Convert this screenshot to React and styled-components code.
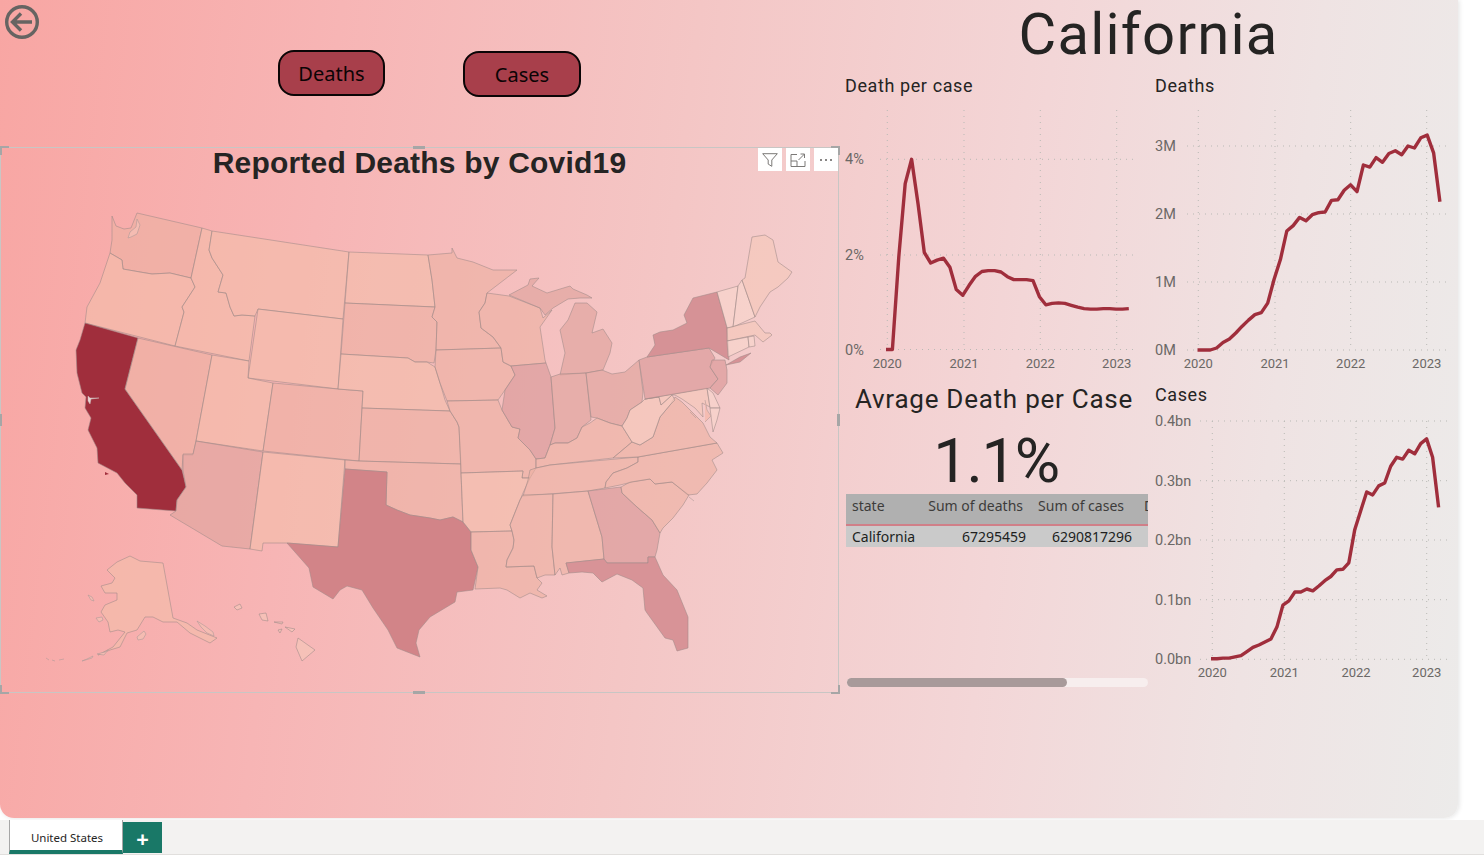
import styled, { createGlobalStyle } from 'styled-components';

const GlobalStyle = createGlobalStyle`
  html, body {
    margin: 0;
    padding: 0;
    background: #fff;
    overflow: hidden;
  }
`;

const DIN = `Roboto, "Liberation Sans", sans-serif`;
const SEGOE = `"Noto Sans", "Open Sans", sans-serif`;

// pale tones are see-through, the page gradient shows in them as it does in the map
const TONES = {
  california: '#a02e3c',
  texas: '#d28488',
  florida: '#d89397',
  newYork: '#d69296',
  strong: 'rgba(222, 160, 160, 0.8)',
  mid: 'rgba(225, 165, 160, 0.7)',
  base: 'rgba(236, 176, 162, 0.6)',
  pale: 'rgba(243, 190, 170, 0.6)',
  light: 'rgba(245, 200, 185, 0.6)',
  lighter: 'rgba(248, 215, 205, 0.6)',
};

// outlines are in page pixels, the map svg viewBox lines up with them
const STATES = [
  { name: 'WA', tone: 'base', pts: '112,216 116,226 124,229 131,228 137,213 202,228 191,278 170,273 152,274 140,272 123,269 122,260 110,253 112,240' },
  { name: 'OR', tone: 'pale', pts: '110,253 122,260 123,269 140,272 152,274 170,273 191,278 195,287 182,307 184,312 175,346 85,323 87,307 100,283' },
  { name: 'CA', tone: 'california', pts: '85,323 138,338 125,389 182,470 186,487 177,500 176,511 137,508 137,495 125,483 117,473 98,463 97,448 88,430 91,418 85,408 86,397 82,393 77,373 76,350 80,340' },
  { name: 'ID', tone: 'pale', pts: '202,228 212,231 209,250 212,258 223,275 218,292 226,293 230,307 234,316 242,315 255,316 249,361 175,346 184,312 182,307 195,287 191,278' },
  { name: 'MT', tone: 'pale', pts: '212,231 349,252 343,319 258,309 255,316 242,315 234,316 230,307 226,293 218,292 223,275 212,258 209,250' },
  { name: 'WY', tone: 'pale', pts: '258,309 343,319 338,389 248,378' },
  { name: 'NV', tone: 'base', pts: '138,338 212,355 196,441 193,455 183,455 182,470 125,389' },
  { name: 'UT', tone: 'pale', pts: '212,355 249,361 248,378 273,383 263,451 196,441' },
  { name: 'CO', tone: 'base', pts: '273,383 338,389 363,391 359,461 263,451' },
  { name: 'AZ', tone: 'mid', pts: '196,441 263,452 250,549 222,546 170,515 176,511 177,500 186,487 183,470 183,454 193,454' },
  { name: 'NM', tone: 'pale', pts: '263,452 345,460 338,547 287,543 263,543 262,551 250,549' },
  { name: 'ND', tone: 'pale', pts: '349,252 428,255 432,280 435,307 345,303' },
  { name: 'SD', tone: 'base', pts: '345,303 435,307 432,317 437,322 436,350 434,363 427,362 415,362 408,358 341,354' },
  { name: 'NE', tone: 'pale', pts: '341,354 408,358 415,362 427,362 435,367 440,383 445,400 450,411 362,408 363,391 338,389' },
  { name: 'KS', tone: 'base', pts: '362,408 450,411 457,422 459,427 461,464 359,461' },
  { name: 'OK', tone: 'base', pts: '345,460 359,461 461,464 461,473 463,522 453,517 440,520 430,518 410,515 397,510 386,505 387,472 345,469' },
  { name: 'TX', tone: 'texas', pts: '345,469 387,472 386,505 397,510 410,515 430,518 440,520 453,517 463,522 471,532 471,550 478,567 473,590 457,592 455,602 430,617 419,630 416,643 420,657 397,648 388,630 373,608 362,590 347,586 340,590 333,599 313,587 309,568 287,543 338,547' },
  { name: 'MN', tone: 'base', pts: '428,255 452,253 452,248 457,258 473,262 493,270 517,270 487,293 485,303 479,312 481,328 493,337 501,348 436,350 437,322 432,317 435,307 432,280' },
  { name: 'IA', tone: 'base', pts: '436,350 501,348 503,362 511,366 515,375 505,390 498,400 447,401 440,383 435,367' },
  { name: 'MO', tone: 'base', pts: '447,401 498,400 502,410 512,427 520,429 518,438 530,450 536,459 536,468 530,478 522,478 523,471 461,473 459,427 457,422 450,411' },
  { name: 'AR', tone: 'pale', pts: '461,473 523,471 522,478 530,478 523,493 520,500 510,525 512,531 471,532 463,522' },
  { name: 'LA', tone: 'base', pts: '471,532 512,531 514,540 513,548 507,560 506,567 534,566 537,578 542,583 537,590 547,596 542,598 530,593 520,598 507,590 500,588 475,589 478,567 471,550' },
  { name: 'WI', tone: 'base', pts: '487,293 509,296 540,308 543,318 552,310 540,327 545,360 546,363 511,366 503,362 501,348 493,337 481,328 479,312 485,303' },
  { name: 'MI-U', tone: 'mid', pts: '509,295 528,285 530,279 539,278 532,286 547,293 570,286 573,289 587,295 592,298 580,298 568,299 553,308 545,315 540,308' },
  { name: 'MI-L', tone: 'mid', pts: '560,375 565,353 560,330 568,320 575,303 587,303 597,312 592,333 603,329 612,343 610,353 603,370 586,373' },
  { name: 'IL', tone: 'strong', pts: '511,366 546,363 551,377 555,428 550,445 545,458 536,459 530,450 518,438 520,429 512,427 502,410 505,390 515,375' },
  { name: 'IN', tone: 'mid', pts: '551,377 560,374 586,373 591,420 582,427 577,438 568,443 555,443 550,445 555,428' },
  { name: 'OH', tone: 'mid', pts: '586,373 602,370 612,374 625,372 639,360 643,392 642,402 630,410 627,418 622,426 610,423 597,418 591,417' },
  { name: 'KY', tone: 'base', pts: '536,459 545,458 550,445 555,443 568,443 577,438 582,427 590,423 597,418 610,423 622,426 632,442 613,458 550,465 536,468' },
  { name: 'TN', tone: 'base', pts: '536,468 550,465 638,457 638,462 627,468 613,473 606,482 605,488 588,491 523,496 528,480 530,470' },
  { name: 'MS', tone: 'base', pts: '523,495 553,494 552,547 555,575 545,575 537,578 534,566 506,567 507,560 513,548 514,540 512,531 510,525 520,500' },
  { name: 'AL', tone: 'base', pts: '553,494 588,491 602,537 604,559 566,563 569,573 562,575 560,568 555,575 552,547' },
  { name: 'GA', tone: 'strong', pts: '588,491 621,487 622,493 637,507 652,520 660,533 657,550 655,557 648,557 648,563 607,563 604,559 602,537' },
  { name: 'FL', tone: 'florida', pts: '566,563 604,559 607,563 648,563 648,557 655,557 663,575 677,590 688,617 688,648 677,651 673,640 665,638 647,613 645,610 643,588 632,580 617,574 602,582 593,573 582,572 569,573' },
  { name: 'SC', tone: 'base', pts: '621,487 630,482 650,479 655,484 672,482 689,495 683,505 673,518 663,528 660,533 652,520 637,507 622,493' },
  { name: 'NC', tone: 'base', pts: '638,457 717,443 723,453 712,460 717,470 707,483 697,494 688,495 672,482 655,484 650,479 632,482 620,485 605,488 606,482 613,473 627,468 638,462' },
  { name: 'VA', tone: 'base', pts: '613,458 632,442 640,445 653,437 660,417 670,405 675,397 682,402 693,413 703,423 710,437 717,443 638,457' },
  { name: 'WV', tone: 'light', pts: '622,426 627,418 630,410 642,402 645,399 659,397 661,405 672,395 675,400 670,405 660,417 653,437 640,445 632,442' },
  { name: 'MD', tone: 'light', pts: '645,399 707,388 710,407 702,403 703,417 695,408 682,399 675,395 672,395 661,405 659,397' },
  { name: 'DE', tone: 'lighter', pts: '707,388 713,393 720,408 710,408' },
  { name: 'DEL', tone: 'lighter', pts: '710,408 720,408 717,420 713,432' },
  { name: 'PA', tone: 'strong', pts: '639,360 647,357 709,348 715,358 710,367 718,379 710,388 645,399' },
  { name: 'NY', tone: 'newYork', pts: '647,357 655,345 653,335 660,332 673,330 687,323 684,315 693,298 717,292 727,327 729,360 709,348' },
  { name: 'LI', tone: 'newYork', pts: '726,365 740,357 751,353 740,362' },
  { name: 'NJ', tone: 'strong', pts: '712,360 725,360 727,370 727,383 718,395 710,388 718,379 710,367' },
  { name: 'VT', tone: 'lighter', pts: '717,292 738,286 733,327 727,328' },
  { name: 'NH', tone: 'lighter', pts: '738,286 742,280 755,317 733,327' },
  { name: 'ME', tone: 'light', pts: '742,280 745,278 752,237 765,235 773,240 778,262 792,272 788,278 778,287 770,292 760,307 755,317' },
  { name: 'MA', tone: 'light', pts: '727,328 755,321 765,333 770,333 772,335 763,342 755,335 727,341' },
  { name: 'CT', tone: 'lighter', pts: '727,341 748,337 749,347 728,357' },
  { name: 'RI', tone: 'lighter', pts: '748,337 754,336 755,346 749,347' },
  { name: 'AK', tone: 'pale', pts: '130,556 140,561 163,563 173,618 187,623 197,630 217,638 210,643 190,633 177,622 163,622 153,617 145,617 137,630 127,633 120,647 110,650 98,655 113,647 125,632 118,630 110,632 108,622 101,612 105,605 117,600 117,593 105,593 101,586 112,583 115,578 107,570 117,562' },
  { name: 'HI-1', tone: 'light', pts: '298,638 315,650 302,661 296,647' },
  { name: 'HI-2', tone: 'light', pts: '285,627 295,629 292,632' },
  { name: 'HI-3', tone: 'light', pts: '259,614 266,613 268,621 262,620' },
  { name: 'HI-4', tone: 'light', pts: '234,607 240,604 242,608 237,610' },
  { name: 'HI-5', tone: 'light', pts: '274,622 283,622 282,624' },
  { name: 'HI-6', tone: 'light', pts: '278,630 282,629 280,633' },
];

const deathRate = [0, 0, 1.95, 3.49, 4, 3.07, 2.04, 1.82, 1.88, 1.92, 1.73, 1.26, 1.14, 1.35, 1.54, 1.64, 1.66, 1.66, 1.63, 1.53, 1.47, 1.47, 1.47, 1.45, 1.11, 0.94, 0.97, 0.98, 0.97, 0.93, 0.89, 0.86, 0.85, 0.85, 0.86, 0.86, 0.85, 0.85, 0.86];
const deaths = [0, 0, 0, 0.03, 0.11, 0.16, 0.25, 0.35, 0.44, 0.52, 0.55, 0.69, 1.04, 1.33, 1.75, 1.83, 1.95, 1.9, 1.99, 2.02, 2.03, 2.2, 2.21, 2.35, 2.43, 2.33, 2.72, 2.69, 2.83, 2.76, 2.89, 2.93, 2.87, 3.0, 2.97, 3.12, 3.16, 2.9, 2.18];
const cases = [0.001, 0.001, 0.002, 0.002, 0.004, 0.006, 0.013, 0.02, 0.024, 0.029, 0.034, 0.054, 0.091, 0.098, 0.113, 0.113, 0.118, 0.115, 0.123, 0.132, 0.139, 0.15, 0.151, 0.162, 0.218, 0.25, 0.281, 0.276, 0.291, 0.296, 0.324, 0.339, 0.336, 0.351, 0.345, 0.362, 0.37, 0.339, 0.255];

const CHARTS = {
  rate: {
    box: [845, 97, 305, 278],
    data: deathRate,
    x0: 886, xStep: 6.39,
    gridLeft: 880, gridRight: 1137,
    yTicks: [[0, '0%', 349.5], [2, '2%', 255], [4, '4%', 159.3]],
    xTicks: [[887.3, '2020'], [964, '2021'], [1040.3, '2022'], [1116.7, '2023']],
    gridTop: 110, xLabelY: 368,
  },
  deaths: {
    box: [1155, 97, 300, 278],
    data: deaths,
    x0: 1197.5, xStep: 6.38,
    gridLeft: 1187, gridRight: 1448,
    yTicks: [[0, '0M', 350], [1, '1M', 282], [2, '2M', 214], [3, '3M', 146]],
    xTicks: [[1198.3, '2020'], [1275, '2021'], [1350.7, '2022'], [1426.7, '2023']],
    gridTop: 110, xLabelY: 368,
  },
  cases: {
    box: [1155, 406, 300, 284],
    data: cases,
    x0: 1211, xStep: 5.99,
    gridLeft: 1200, gridRight: 1448,
    yTicks: [[0, '0.0bn', 659.3], [0.1, '0.1bn', 599.7], [0.2, '0.2bn', 540], [0.3, '0.3bn', 480.7], [0.4, '0.4bn', 421]],
    xTicks: [[1212.3, '2020'], [1284.3, '2021'], [1356, '2022'], [1426.7, '2023']],
    gridTop: 421, xLabelY: 677,
  },
};

const LineChart = ({ config }) => {
  const { box, data, x0, xStep, gridLeft, gridRight, yTicks, xTicks, gridTop, xLabelY } = config;
  const [lowVal, lowY] = [yTicks[0][0], yTicks[0][2]];
  const [highVal, highY] = [yTicks[yTicks.length - 1][0], yTicks[yTicks.length - 1][2]];
  const yOf = (v) => lowY + ((v - lowVal) / (highVal - lowVal)) * (highY - lowY);
  const line = data.map((v, i) => `${(x0 + i * xStep).toFixed(1)},${yOf(v).toFixed(1)}`).join(' ');

  return (
    <ChartSvg $w={box[2]} $h={box[3]} viewBox={box.join(' ')}>
      {yTicks.map(([, label, y]) => (
        <g key={label}>
          <GridLine x1={gridLeft} x2={gridRight} y1={y} y2={y} />
          <AxisLabel $size={14.5} x={box[0]} y={y + 5}>{label}</AxisLabel>
        </g>
      ))}
      {xTicks.map(([x, label]) => (
        <g key={label}>
          <GridLine x1={x} x2={x} y1={gridTop} y2={lowY} />
          <AxisLabel $size={13} x={x} y={xLabelY} textAnchor="middle">{label}</AxisLabel>
        </g>
      ))}
      <DataLine points={line} />
    </ChartSvg>
  );
};

const UsMap = () => (
  <MapSvg viewBox="1 178 837 514">
    {STATES.map((s) => (
      <StateShape key={s.name} points={s.pts} $fill={TONES[s.tone]} />
    ))}
    {/* puget sound */}
    <MapDetail d="M130 232l6-5 1-8 3 6-3 9-6 3-3 1z" />
    {/* san francisco bay */}
    <BayShape d="M88 396l2 2 9 0-8 1-1 5-2-3z" />
    {/* channel islands */}
    <IslandDark points="105,472 109,474 105,475" />
    {/* chesapeake and cape fear bits */}
    <MapDetail d="M689 497l5 4M705 400l2 10 4 6-6 6M690 412l6 6" />
    {/* alaska islands */}
    <MapDetail d="M88 595l4 2 2 4-3-1zM96 618l6-1 1 3-4 2zM137 637l7-6 2 3-3 5-5 1zM197 621l8 5 8 6 1 4-7-3-6-6zM82 661l5-2 6-3-1 2zM97 654l8-2 3-2-4 5zM46 658l3 2M52 660l3 1M59 660l5-1" />
  </MapSvg>
);

const HANDLES = [
  ['tl', 'corner'], ['tr', 'corner'], ['bl', 'corner'], ['br', 'corner'],
  ['tm', 'flat'], ['bm', 'flat'], ['ml', 'tall'], ['mr', 'tall'],
];

const App = () => (
  <>
    <GlobalStyle />
    <Page>
      <Canvas>
        <LeftPane>
          <TopBar>
            <BackIcon viewBox="0 0 34 34">
              <circle cx="17" cy="17" r="15.300" />
              <path d="M8 17h19M16 8.500l-8.500 8.500 8.500 8.500" />
            </BackIcon>
            <ButtonRow>
              <PillButton $w={107}>Deaths</PillButton>
              <PillButton $w={118} $nudge={1}>Cases</PillButton>
            </ButtonRow>
          </TopBar>

          <MapVisual>
            <MapTitle>Reported Deaths by Covid19</MapTitle>
            <UsMap />
            <VisualTools>
              <ToolButton>
                <svg width="16" height="14" viewBox="0 0 16 14">
                  <ToolStroke d="M.7.700h14.600l-5.500 6.300v6.300l-3.600-2.200v-4.100z" />
                </svg>
              </ToolButton>
              <ToolButton>
                <svg width="16" height="14" viewBox="0 0 16 14">
                  <ToolStroke d="M7 1.500H1v12h14V8M1 8h6v5.500M8.500 7l6-6M10.500 1h4v4" />
                </svg>
              </ToolButton>
              <ToolButton>
                <DotRow>
                  <i /><i /><i />
                </DotRow>
              </ToolButton>
            </VisualTools>
            {HANDLES.map(([spot, kind]) => (
              <Handle key={spot} $spot={spot} $kind={kind} />
            ))}
          </MapVisual>
        </LeftPane>

        <RightPane>
          <StateTitle>California</StateTitle>
          <Columns>
            <Column>
              <ChartLabel>Death per case</ChartLabel>
              <LineChart config={CHARTS.rate} />
              <KpiTitle>Avrage Death per Case</KpiTitle>
              <KpiValue>1.1%</KpiValue>
              <DataTable>
                <HeadRow>
                  <Cell>state</Cell>
                  <Cell $right>Sum of deaths</Cell>
                  <Cell $right>Sum of cases</Cell>
                  <ClippedCell>D</ClippedCell>
                </HeadRow>
                <BodyRow>
                  <Cell>California</Cell>
                  <Cell $right>67295459</Cell>
                  <Cell $right>6290817296</Cell>
                </BodyRow>
              </DataTable>
              <ScrollTrack>
                <ScrollThumb />
              </ScrollTrack>
            </Column>
            <Column>
              <ChartLabel>Deaths</ChartLabel>
              <LineChart config={CHARTS.deaths} />
              <ChartLabel $top={9}>Cases</ChartLabel>
              <LineChart config={CHARTS.cases} />
            </Column>
          </Columns>
        </RightPane>
      </Canvas>

      <TabBar>
        <TabArrow />
        <Tab>United States</Tab>
        <AddTab>+</AddTab>
      </TabBar>
    </Page>
  </>
);

export default App;

const Page = styled.div`
  width: 1484px;
  height: 857px;
  display: flex;
  flex-direction: column;
  background: #fff;
`;

const Canvas = styled.div`
  width: 1458px;
  height: 818px;
  display: grid;
  grid-template-columns: 839px 1fr;
  border-radius: 0 0 14px 14px;
  background: linear-gradient(97deg, #f8a6a3 0%, #f7b5b5 22%, #f4c6c5 45%, #f3d6d7 68%, #efe3e3 85%, #ecebea 100%);
  box-shadow: 1px 0 5px rgba(0, 0, 0, 0.12);
  overflow: hidden;
`;

const LeftPane = styled.div`
  display: flex;
  flex-direction: column;
`;

const TopBar = styled.div`
  height: 147px;
  box-sizing: border-box;
  display: flex;
  align-items: flex-start;
  padding: 5px 0 0 5px;
`;

const BackIcon = styled.svg`
  width: 34px;
  height: 34px;
  fill: none;
  stroke: #666462;
  stroke-width: 3.4;
`;

const ButtonRow = styled.div`
  display: flex;
  align-items: flex-start;
  gap: 78px;
  margin: 45px 0 0 239px;
`;

const PillButton = styled.div`
  width: ${(p) => p.$w}px;
  height: 46px;
  box-sizing: border-box;
  margin-top: ${(p) => p.$nudge || 0}px;
  display: flex;
  align-items: center;
  justify-content: center;
  background: #a83f4b;
  border: 2px solid #0a0506;
  border-radius: 16px;
  font-family: ${SEGOE};
  font-size: 20px;
  color: #0b0405;
`;

const MapVisual = styled.div`
  position: relative;
  width: 839px;
  height: 546px;
  box-sizing: border-box;
  border: 1px solid #c8c6c4;
  display: flex;
  flex-direction: column;
`;

const MapTitle = styled.div`
  height: 30px;
  flex: none;
  text-align: center;
  font-family: "Liberation Sans", Arial, sans-serif;
  font-size: 30px;
  line-height: 30px;
  letter-spacing: 0.2px;
  font-weight: 700;
  color: #252423;
`;

const MapSvg = styled.svg`
  width: 837px;
  height: 514px;
  display: block;
`;

const StateShape = styled.polygon`
  fill: ${(p) => p.$fill};
  stroke: #a08a88;
  stroke-opacity: 0.8;
  stroke-width: 0.7;
  stroke-linejoin: round;
`;

const MapDetail = styled.path`
  fill: #f5bcb2;
  stroke: #b09a98;
  stroke-width: 0.6;
`;

const BayShape = styled.path`
  fill: #e8d5d3;
  stroke: #cbb6b6;
  stroke-width: 0.5;
`;

const IslandDark = styled.polygon`
  fill: #a02e3c;
`;

const VisualTools = styled.div`
  position: absolute;
  top: 0;
  right: 0;
  display: flex;
  gap: 4px;
`;

const ToolButton = styled.div`
  width: 24px;
  height: 23px;
  background: #fff;
  display: flex;
  align-items: center;
  justify-content: center;
`;

const ToolStroke = styled.path`
  fill: none;
  stroke: #7b7977;
  stroke-width: 1;
`;

const DotRow = styled.div`
  display: flex;
  gap: 3px;

  i {
    width: 2px;
    height: 2px;
    background: #605e5c;
    border-radius: 50%;
  }
`;

const Handle = styled.span`
  position: absolute;
  background: ${(p) => (p.$kind === 'corner' ? 'transparent' : '#a6a6a6')};
  ${(p) => p.$kind === 'flat' && 'width: 12px; height: 3px;'}
  ${(p) => p.$kind === 'tall' && 'width: 3px; height: 12px;'}
  ${(p) => p.$kind === 'corner' && 'width: 7px; height: 7px; border: 0 solid #a6a6a6;'}
  ${(p) => p.$spot === 'tm' && 'top: -2px; left: 412px;'}
  ${(p) => p.$spot === 'bm' && 'bottom: -2px; left: 412px;'}
  ${(p) => p.$spot === 'ml' && 'left: -2px; top: 266px;'}
  ${(p) => p.$spot === 'mr' && 'right: -2px; top: 266px;'}
  ${(p) => p.$spot === 'tl' && 'top: -2px; left: -1px; border-width: 2px 0 0 2px;'}
  ${(p) => p.$spot === 'tr' && 'top: -2px; right: -2px; border-width: 2px 2px 0 0;'}
  ${(p) => p.$spot === 'bl' && 'bottom: -2px; left: -1px; border-width: 0 0 2px 2px;'}
  ${(p) => p.$spot === 'br' && 'bottom: -2px; right: -2px; border-width: 0 2px 2px 0;'}
`;

const RightPane = styled.div`
  display: flex;
  flex-direction: column;
  padding-left: 6px;
`;

const StateTitle = styled.div`
  height: 75px;
  margin-left: -6px;
  text-align: center;
  font-family: ${DIN};
  font-size: 58px;
  font-weight: 450;
  line-height: 68px;
  letter-spacing: 1.2px;
  color: #252423;
`;

const Columns = styled.div`
  display: grid;
  grid-template-columns: 310px 1fr;
`;

const Column = styled.div`
  display: flex;
  flex-direction: column;
`;

const ChartLabel = styled.div`
  height: 22px;
  margin-top: ${(p) => p.$top || 0}px;
  font-family: ${DIN};
  font-size: 18px;
  line-height: 22px;
  letter-spacing: 0.6px;
  color: #252423;
`;

const ChartSvg = styled.svg`
  width: ${(p) => p.$w}px;
  height: ${(p) => p.$h}px;
  display: block;
  flex: none;
`;

const GridLine = styled.line`
  stroke: #b9b9b5;
  stroke-width: 1;
  stroke-dasharray: 1 5;
`;

const AxisLabel = styled.text`
  font-family: ${DIN};
  font-size: ${(p) => p.$size}px;
  fill: #6b6866;
`;

const DataLine = styled.polyline`
  fill: none;
  stroke: #a02e3c;
  stroke-width: 3.4;
  stroke-linejoin: round;
`;

const KpiTitle = styled.div`
  height: 38px;
  margin-top: 5px;
  width: 298px;
  text-align: center;
  font-family: ${DIN};
  font-size: 26px;
  line-height: 38px;
  letter-spacing: 0.75px;
  color: #252423;
`;

const KpiValue = styled.div`
  height: 69px;
  margin-top: 7px;
  width: 302px;
  text-align: center;
  font-family: ${DIN};
  font-size: 62px;
  font-weight: 450;
  line-height: 72px;
  letter-spacing: -1.5px;
  color: #252423;
`;

const DataTable = styled.div`
  width: 302px;
  margin-left: 1px;
  overflow: hidden;
  font-family: ${SEGOE};
  font-size: 14px;
`;

const HeadRow = styled.div`
  height: 32px;
  box-sizing: border-box;
  display: grid;
  grid-template-columns: 70px 108px 101px 40px;
  align-items: center;
  padding-bottom: 7px;
  background: #b0b0b0;
  border-bottom: 2px solid #d07f88;
  color: #3d3c3b;
`;

const BodyRow = styled(HeadRow)`
  height: 21px;
  grid-template-columns: 70px 111px 106px;
  padding-bottom: 0;
  background: #cacaca;
  border-bottom: 0;
  color: #201f1e;
`;

const Cell = styled.div`
  padding: 0 ${(p) => (p.$right ? '1px' : '0')} 0 ${(p) => (p.$right ? '0' : '6px')};
  text-align: ${(p) => (p.$right ? 'right' : 'left')};
  white-space: nowrap;
`;

const ClippedCell = styled(Cell)`
  padding-left: 19px;
`;

const ScrollTrack = styled.div`
  width: 301px;
  height: 9px;
  margin: 131px 0 0 2px;
  border-radius: 5px;
  background: #f7eeee;
`;

const ScrollThumb = styled.div`
  width: 220px;
  height: 100%;
  border-radius: 5px;
  background: #a89a9a;
`;

const TabBar = styled.div`
  height: 35px;
  margin-top: 2px;
  display: flex;
  align-items: stretch;
  background: #f3f2f1;
  border-bottom: 1px solid #e1dfdd;
  box-sizing: border-box;
`;

const TabArrow = styled.span`
  width: 9px;
  flex: none;
`;

const Tab = styled.div`
  width: 114px;
  box-sizing: border-box;
  display: flex;
  align-items: center;
  justify-content: center;
  padding: 5px 0 0 2px;
  background: #fff;
  border: solid #a6a6a6;
  border-width: 0 1px;
  border-bottom: 4px solid #197867;
  font-family: ${SEGOE};
  font-size: 11.500px;
  color: #252423;
`;

const AddTab = styled.div`
  width: 39px;
  margin: 2px 0 1px 0;
  display: flex;
  align-items: center;
  justify-content: center;
  background: #197867;
  color: #fff;
  font-family: ${SEGOE};
  font-size: 22px;
  font-weight: 700;
`;
